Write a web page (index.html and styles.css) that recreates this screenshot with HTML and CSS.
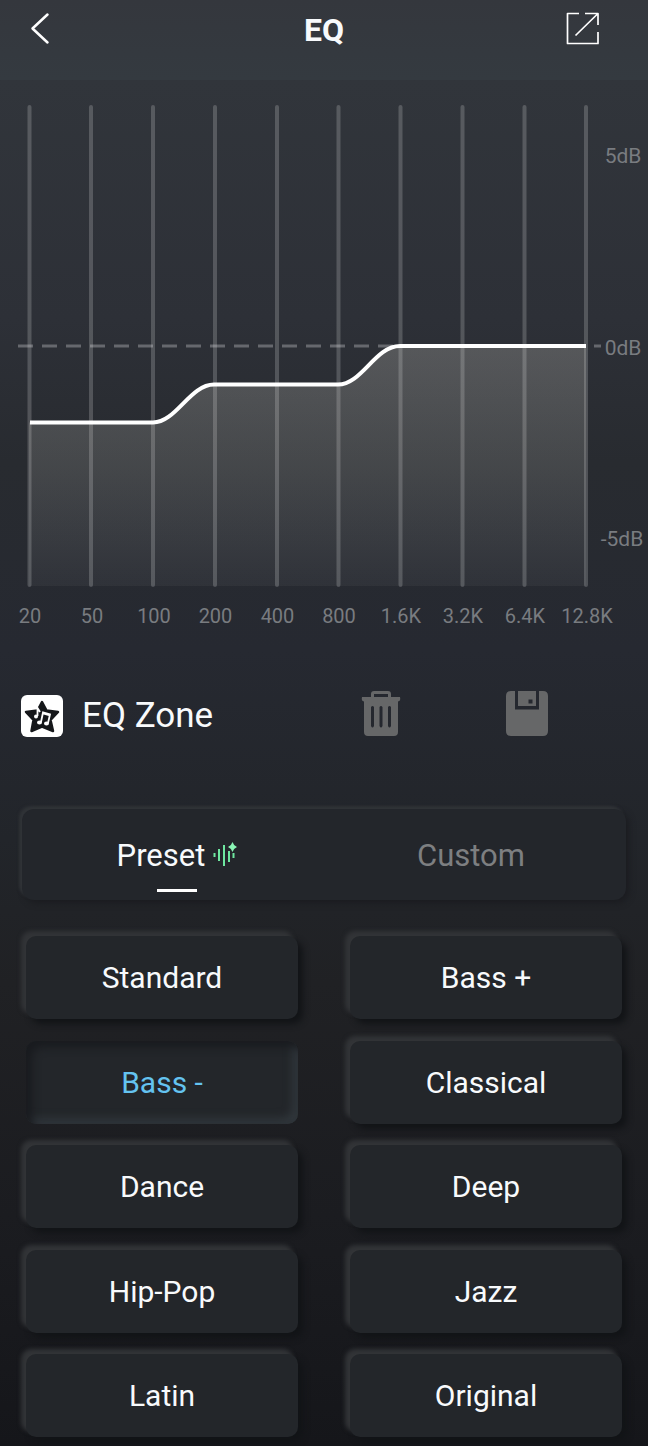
FILE: index.html
```html
<!DOCTYPE html>
<html lang="en">
<head>
<meta charset="utf-8">
<meta name="viewport" content="width=device-width, initial-scale=1">
<title>EQ</title>
<link rel="stylesheet" href="styles.css">
</head>
<body class="screen">
<header class="header">
  <button class="icon-button" type="button" aria-label="Back">
    <svg width="40" height="40" viewBox="0 0 40 40" fill="none" stroke="#fff" stroke-width="2.500" stroke-linecap="round" stroke-linejoin="round"><path d="M27.500 4.500 12.500 18.500 27.500 32.500"/></svg>
  </button>
  <h1 class="title">EQ</h1>
  <button class="icon-button share" type="button" aria-label="Share">
    <svg width="40" height="40" viewBox="0 0 40 40" fill="none" stroke="#fff" stroke-width="1.700" stroke-linejoin="round"><path d="M17 3.500H5.500V33.500H36V22M23 3.500H36V15M36 3.500 13.500 25.500"/></svg>
  </button>
</header>

<main class="main">
  <svg class="chart" viewBox="0 0 648 560" role="img" aria-label="Equalizer curve">
    <defs>
      <linearGradient id="fill" x1="0" y1="266" x2="0" y2="506" gradientUnits="userSpaceOnUse">
        <stop offset="0" stop-color="#f4f0e4" stop-opacity=".21"/>
        <stop offset=".5" stop-color="#f4f4ea" stop-opacity=".14"/>
        <stop offset="1" stop-color="#fff" stop-opacity=".04"/>
      </linearGradient>
    </defs>
    <path class="zero-line" d="M18 266H601"/>
    <path class="grid-lines" d="M29.500 27V505M91 27V505M153 27V505M215 27V505M277 27V505M338.500 27V505M400.500 27V505M462.500 27V505M524.500 27V505M586 27V505"/>
    <path fill="url(#fill)" d="M29 342.500H153C176 342.500 190 304.500 214 304.500H338C362 304.500 375 266 400 266H586V506H29Z"/>
    <path class="curve" d="M30 342.500H153C176 342.500 190 304.500 214 304.500H338C362 304.500 375 266 400 266H586"/>
    <g class="freq">
      <text x="30" y="543">20</text><text x="92" y="543">50</text><text x="154" y="543">100</text><text x="215.500" y="543">200</text><text x="277.500" y="543">400</text><text x="339" y="543">800</text><text x="401" y="543">1.6K</text><text x="463" y="543">3.2K</text><text x="525" y="543">6.4K</text><text x="587" y="543">12.8K</text>
    </g>
    <g class="level">
      <text x="623" y="83">5dB</text><text x="623" y="275">0dB</text><text x="622" y="466">-5dB</text>
    </g>
  </svg>

  <section class="zone">
    <svg width="42" height="42" viewBox="0 0 42 42" aria-hidden="true">
      <rect width="42" height="42" rx="6" fill="#fff"/>
      <path d="M21 7 25.500 15.500 37 17 29.500 25 32 36 21 31.500 10.500 36 12.500 25 5 17 16.500 15.500Z" fill="#15171a" stroke="#15171a" stroke-width="2.500" stroke-linejoin="round"/>
      <g stroke="#fff" stroke-width="1.800" fill="none"><path d="M20 27 22 17.500 29 19.500 27 28M22 18.500 29 20.500"/><path d="M16.500 21V13L19 17"/></g>
      <g fill="#fff"><ellipse cx="18.500" cy="27.500" rx="2.500" ry="2"/><ellipse cx="25.500" cy="28.500" rx="2.500" ry="2"/><circle cx="15" cy="21.500" r="2"/></g>
    </svg>
    <h2 class="zone-name">EQ Zone</h2>
    <div class="actions">
      <button class="icon-button" type="button" aria-label="Delete">
        <svg width="40" height="46" viewBox="0 0 40 46"><path fill="#666768" fill-rule="evenodd" d="M10 7V4Q10 1 13 1H27Q30 1 30 4V7H39Q40 11 37 11.500V42Q37 46 33 46H7Q3 46 3 42V11.500Q0 11 1 7ZM13 7H27V4H13ZM10 17V36Q11.500 39 13 36V17Q11.500 15 10 17ZM18.500 17V36Q20 39 21.500 36V17Q20 15 18.500 17ZM27 17V36Q28.500 39 30 36V17Q28.500 15 27 17Z"/></svg>
      </button>
      <button class="icon-button" type="button" aria-label="Save">
        <svg width="42" height="46" viewBox="0 0 42 46"><path fill="#666768" fill-rule="evenodd" d="M5 1H9V19.500H33V1H37Q42 1 42 6V41Q42 46 37 46H5Q0 46 0 41V6Q0 1 5 1ZM12 1H30V16H12ZM22.500 9.500V13.500H26.500V9.500Z"/></svg>
      </button>
    </div>
  </section>

  <div class="tabs" role="tablist">
    <button class="tab tab-active" type="button" role="tab" aria-selected="true">Preset
      <svg class="wave" width="24" height="26" viewBox="0 0 24 26" fill="none" stroke="#6ee7a0" stroke-width="2" aria-hidden="true"><path d="M1.500 12V16M6 8V20M11 4V25M16 10V21M20.500 12V17"/><path fill="#8af5b5" stroke="none" d="M19.500 1Q20.500 4.500 24 6Q20.500 7.500 19.500 11Q18.500 7.500 15 6Q18.500 4.500 19.500 1Z"/></svg>
    </button>
    <button class="tab" type="button" role="tab" aria-selected="false">Custom</button>
  </div>

  <div class="presets">
    <button class="preset" type="button">Standard</button>
    <button class="preset" type="button">Bass +</button>
    <button class="preset preset-active" type="button" aria-pressed="true">Bass -</button>
    <button class="preset" type="button">Classical</button>
    <button class="preset" type="button">Dance</button>
    <button class="preset" type="button">Deep</button>
    <button class="preset" type="button">Hip-Pop</button>
    <button class="preset" type="button">Jazz</button>
    <button class="preset" type="button">Latin</button>
    <button class="preset" type="button">Original</button>
  </div>
</main>
</body>
</html>
```

FILE: styles.css
```css
* { box-sizing: border-box; }

.screen {
  display: flex;
  flex-direction: column;
  min-height: 100vh;
  margin: 0;
  color: #f8fafc;
  font-family: Roboto, "Liberation Sans", sans-serif;
  background: linear-gradient(#31353b 80px, #2d3037 22%, #282b30 32%, #262931 45%, #22252a 58%, #202124 68%, #1b1c20 84%, #15161a);
}

button {
  padding: 0;
  border: 0;
  background: none;
  color: inherit;
  font: inherit;
  cursor: pointer;
}

.icon-button { display: flex; }

.header {
  display: grid;
  grid-template-columns: 1fr auto 1fr;
  align-items: center;
  height: 80px;
  padding: 0 20px 20px;
  background: linear-gradient(#34373d, #343a40);
}

.title {
  margin: 0;
  font-size: 32px;
  line-height: 40px;
}

.share {
  justify-self: end;
  margin-right: 26px;
}

.main {
  display: flex;
  flex: 1;
  flex-direction: column;
}

.chart { display: block; width: 100%; height: auto; }
.zero-line { fill: none; stroke: #fff; stroke-opacity: .28; stroke-width: 3; stroke-dasharray: 15 9; }
.grid-lines { fill: none; stroke: #fff; stroke-opacity: .19; stroke-width: 4; stroke-linecap: round; }
.curve { fill: none; stroke: #fff; stroke-width: 4; }
.freq, .level { fill: #797c80; text-anchor: middle; }
.freq { font-size: 20px; }
.level { font-size: 21px; }

.zone {
  display: flex;
  align-items: center;
  gap: 19px;
  padding: 48px 100px 0 21px;
}

.zone-name {
  margin: 0;
  font-size: 35px;
  font-weight: 400;
  line-height: 56px;
}

.actions {
  display: flex;
  gap: 105px;
  margin-left: auto;
  padding-bottom: 6px;
}

.tabs {
  display: grid;
  grid-template-columns: 1fr 1fr;
  margin: 65px 22px 0;
  padding: 0 8px;
  border-radius: 12px;
  background: #23262b;
  box-shadow: -3px -3px 3px #303337, 3px 3px 6px #1b1c20;
}

.tab {
  position: relative;
  display: flex;
  align-items: center;
  justify-content: center;
  gap: 8px;
  height: 91px;
  padding-top: 2px;
  color: #7d7f81;
  font-size: 31px;
}

.tab-active { color: #f8fafc; }

.tab-active::after {
  content: "";
  position: absolute;
  bottom: 8px;
  width: 40px;
  height: 3px;
  background: #fff;
}

.wave { margin-bottom: 4px; }

.presets {
  display: grid;
  flex: 1;
  grid-template-columns: 1fr 1fr;
  align-content: space-between;
  gap: 20px 52px;
  padding: 36px 26px 9px;
}

.preset {
  height: 83px;
  border-radius: 10px;
  background: #23262a;
  box-shadow: -5px -5px 4px #323437, 5px 5px 6px #121417;
  font-size: 30px;
}

.preset-active {
  color: #64c3f0;
  box-shadow: inset 6px 6px 8px #191b1f, inset -6px -6px 8px #30363b;
}
```
